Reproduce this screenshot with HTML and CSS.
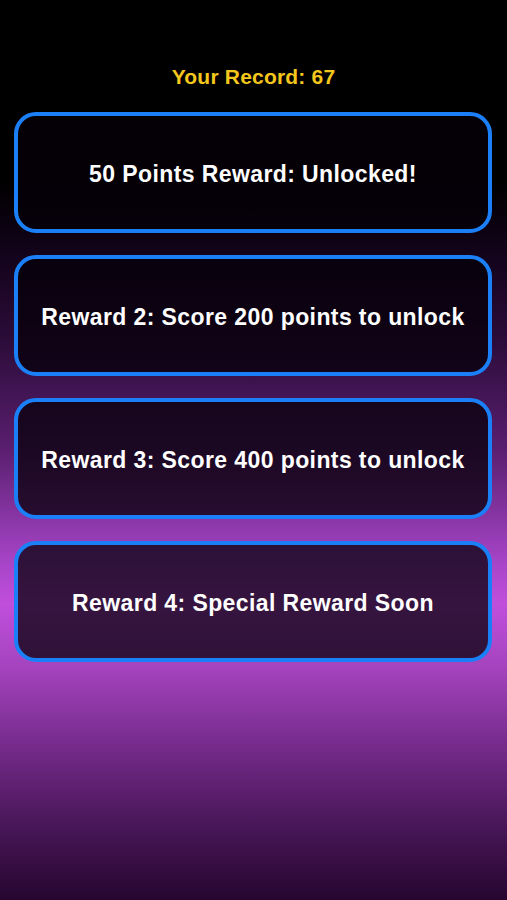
FILE: index.html
```html
<!DOCTYPE html>
<html>
<head>
<meta charset="utf-8">
<link rel="stylesheet" href="styles.css">
</head>
<body>
<main class="screen">
  <h1 class="record">Your Record: 67</h1>
  <section class="rewards">
    <div class="card">50 Points Reward: Unlocked!</div>
    <div class="card">Reward 2: Score 200 points to unlock</div>
    <div class="card">Reward 3: Score 400 points to unlock</div>
    <div class="card">Reward 4: Special Reward Soon</div>
  </section>
</main>
</body>
</html>
```
FILE: styles.css
```css
html, body {
  margin: 0;
  padding: 0;
  height: 100%;
}
body {
  font-family: "Liberation Sans", Arial, sans-serif;
  background: linear-gradient(to bottom,
    #000000 0%,
    #000000 20%,
    #12031a 28%,
    #2c0c3a 38%,
    #5a1f70 50%,
    #a443c4 62%,
    #c04fdc 67%,
    #a544be 74%,
    #7a2d90 82%,
    #4c185c 91%,
    #26062f 100%);
}
.screen {
  width: 507px;
  height: 900px;
  box-sizing: border-box;
  padding-top: 64px;
}
.record {
  margin: 0;
  text-align: center;
  color: #f4c71c;
  font-size: 21px;
  letter-spacing: 0.2px;
  font-weight: bold;
  line-height: 26px;
}
.rewards {
  margin-top: 22px;
  padding: 0 15px 0 14px;
  display: flex;
  flex-direction: column;
  gap: 22px;
}
.card {
  height: 121px;
  box-sizing: border-box;
  padding-top: 3px;
  border: 4px solid #1b80f8;
  border-radius: 22px;
  background: rgba(6, 0, 8, 0.74);
  color: #ffffff;
  font-size: 23px;
  letter-spacing: 0.4px;
  font-weight: bold;
  display: flex;
  align-items: center;
  justify-content: center;
  text-align: center;
}
```
